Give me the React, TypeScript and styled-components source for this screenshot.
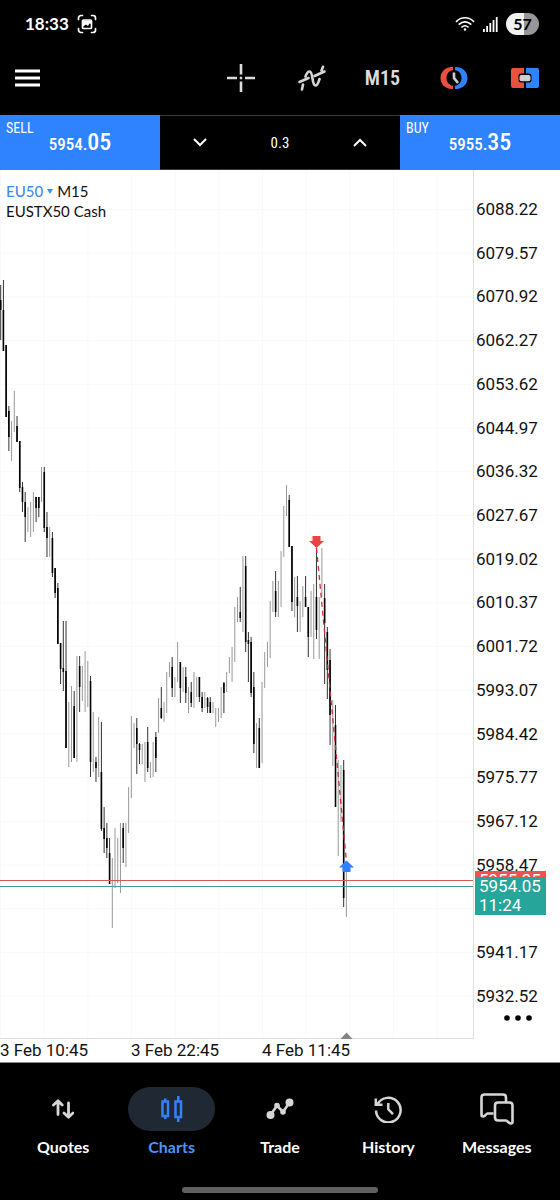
import React from "react";
import styled, { createGlobalStyle } from "styled-components";

const GlobalStyle = createGlobalStyle`
  * { box-sizing: border-box; }
  body { margin: 0; background: #000; }
  button, input { font: inherit; color: inherit; border: 0; background: none; padding: 0; margin: 0; }
`;

const condensed = `"Liberation Sans Narrow", "Roboto Condensed", Roboto, sans-serif`;
const casual = `Lato, "Open Sans", sans-serif`;

const Screen = styled.div`
  min-height: 100vh;
  display: flex;
  flex-direction: column;
  background: #000;
  color: #fff;
  font-family: Roboto, sans-serif;
`;

const StatusBar = styled.header`
  display: flex;
  align-items: center;
  height: 48px;
  padding: 0 21px 0 25px;
  gap: 8px;
`;

const Clock = styled.span`
  font: 700 17px/24px ${casual};
`;

const StatusIcons = styled.div`
  display: flex;
  align-items: center;
  gap: 8px;
  margin-left: auto;
`;

const Battery = styled.span`
  width: 33px;
  height: 22px;
  border-radius: 11px;
  background: linear-gradient(90deg, #f2f2f2 56%, #979797 56%);
  color: #000;
  text-align: center;
  font: 700 16px/22px ${casual};
`;

const Toolbar = styled.div`
  display: flex;
  align-items: center;
  justify-content: space-between;
  height: 67px;
  padding: 0 21px 8px 15px;
`;

const ToolGroup = styled.div`
  display: grid;
  grid-template-columns: repeat(5, 71px);
  justify-items: center;
  align-items: center;
  margin-right: -21px;
`;

const IconButton = styled.button`
  display: flex;
  align-items: center;
  justify-content: center;
  cursor: pointer;
  color: #dcdcdc;
  font: 600 20px/28px ${condensed};
`;

const TradeBar = styled.div`
  display: grid;
  grid-template-columns: 2fr 3fr 2fr;
  height: 55px;
`;

const QuoteButton = styled.button`
  display: flex;
  flex-direction: column;
  background: #3083ff;
  color: #fff;
  padding: 6px;
  text-align: left;
  cursor: pointer;
`;

const Side = styled.span`
  font: 400 14px/14px ${condensed};
`;

const Quote = styled.span`
  align-self: center;
  display: flex;
  align-items: baseline;
  font: 500 17px/24px ${condensed};
  margin-top: -5px;
`;

const Pips = styled.span`
  font-size: 24px;
`;

const VolumeBox = styled.div`
  display: grid;
  grid-template-columns: repeat(3, 1fr);
  align-items: center;
  justify-items: center;
  border: 1px solid #36383b;
  border-width: 1px 0;
`;

const VolumeInput = styled.input`
  width: 100%;
  text-align: center;
  color: #fff;
  font: 400 15px/20px ${condensed};
`;

const Chart = styled.main`
  position: relative;
  background: #fff;
  color: #111;
  border-bottom: 1px solid #8a8a8a;
`;

const ChartRow = styled.div`
  display: grid;
  grid-template-columns: minmax(0, 1fr) 86px;
`;

const Plot = styled.svg`
  display: block;
  width: 100%;
  height: auto;
`;

const ChartTitle = styled.div`
  position: absolute;
  top: 11px;
  left: 6px;
  color: #111;
  font: 400 15px/20px ${casual};
`;

const SymbolButton = styled.button`
  display: inline-flex;
  align-items: center;
  gap: 4px;
  margin-right: 4px;
  color: #3f8cf0;
  font-weight: 500;
  cursor: pointer;
`;

const PriceAxis = styled.div`
  position: relative;
  display: flex;
  flex-direction: column;
  padding: 29px 0 9px 2px;
`;

const PriceList = styled.ol`
  flex: 1;
  display: flex;
  flex-direction: column;
  justify-content: space-between;
  list-style: none;
  margin: 0;
  padding: 0;
  font-size: 17px;
  line-height: 20px;
`;

const PriceLabel = styled.li`
  height: 20px;
`;

const MoreButton = styled.button`
  width: 28px;
  height: 24px;
  margin-left: 28px;
  display: flex;
  align-items: center;
  cursor: pointer;
`;

const PriceTag = styled.div<{ $color: string; $top: number }>`
  position: absolute;
  left: 1px;
  top: ${(p) => p.$top}px;
  width: 71px;
  padding-left: 4px;
  background: ${(p) => p.$color};
  color: #fff;
  font-size: 17px;
  line-height: 19px;
`;

const TimeAxis = styled.div`
  display: grid;
  grid-template-columns: repeat(3, 131fr) 167fr;
  height: 23px;
  font-size: 17px;
  line-height: 23px;
  white-space: nowrap;
`;

const BottomNav = styled.nav`
  flex: 1;
  display: flex;
  flex-direction: column;
  justify-content: space-between;
  padding-bottom: 7px;
`;

const Tabs = styled.div`
  display: grid;
  grid-template-columns: repeat(5, 1fr);
  padding: 24px 9px 0;
`;

const Tab = styled.a<{ $active?: boolean }>`
  display: flex;
  flex-direction: column;
  align-items: center;
  gap: 4px;
  text-decoration: none;
  color: ${(p) => (p.$active ? "#4a94f8" : "#fff")};
  font: 700 16px/24px ${casual};
`;

const TabIcon = styled.span<{ $active?: boolean }>`
  display: flex;
  align-items: center;
  justify-content: center;
  width: 87px;
  height: 44px;
  border-radius: 22px;
  color: ${(p) => (p.$active ? "#3083ff" : "#d6d6d6")};
  background: ${(p) => (p.$active ? "#202833" : "transparent")};
`;

const HomeHandle = styled.div`
  align-self: center;
  width: 35%;
  height: 6px;
  border-radius: 3px;
  background: #606060;
`;

/* The empty slot is where the current price tag sits. */
const prices = [
  "6088.22", "6079.57", "6070.92", "6062.27", "6053.62", "6044.97", "6036.32",
  "6027.67", "6019.02", "6010.37", "6001.72", "5993.07", "5984.42", "5975.77",
  "5967.12", "5958.47", "", "5941.17", "5932.52",
];

/* One entry per M15 bar: high, low, and for falling bars the body's top and bottom. */
type Bar = [number, number, number?, number?];
const bars: Bar[] = [
  [115, 170, 130, 140], [110, 181, 140, 181], [175, 247, 175, 247], [236, 281, 241, 267],
  [251, 291], [221, 262], [246, 272, 256, 272], [271, 322, 271, 318],
  [312, 342, 317, 332], [322, 372, 332, 347], [337, 362], [332, 367],
  [322, 362], [327, 352, 327, 338], [327, 347, 327, 338], [297, 332],
  [297, 362, 302, 358], [342, 387, 357, 368], [357, 387], [362, 407, 368, 403],
  [398, 428, 398, 423], [413, 474, 418, 474], [473, 514, 473, 499], [451, 521, 498, 502],
  [451, 578, 501, 578], [532, 597], [516, 592], [521, 588, 536, 588],
  [486, 592], [486, 542, 496, 517], [496, 531], [481, 542],
  [491, 537], [506, 607, 511, 592], [542, 602], [587, 612, 592, 598],
  [547, 607], [552, 661, 602, 659], [637, 683, 658, 669], [653, 688, 668, 678],
  [668, 714, 683, 714], [688, 758], [658, 718], [668, 713],
  [653, 723], [653, 693, 658, 678], [653, 697], [617, 663],
  [546, 628], [553, 578], [548, 604, 558, 574], [573, 594, 574, 580],
  [574, 594], [572, 612], [557, 602, 572, 598], [592, 608],
  [572, 607], [562, 602, 567, 588], [528, 563], [517, 549, 538, 548],
  [532, 552], [502, 543], [492, 507], [487, 527, 497, 518],
  [507, 527], [472, 512], [492, 533, 492, 518], [497, 522],
  [497, 533, 507, 523], [517, 543], [512, 537, 522, 533], [502, 538],
  [507, 527], [507, 532, 507, 527], [522, 542, 527, 538], [522, 538],
  [527, 543, 528, 537], [527, 543, 532, 543], [532, 543], [538, 557],
  [538, 552], [517, 548], [512, 543, 513, 523], [502, 522],
  [487, 503], [477, 512], [437, 492], [427, 452],
  [417, 452, 442, 448], [386, 462], [386, 482, 396, 472], [462, 512, 470, 474],
  [467, 527, 472, 523], [502, 583, 517, 574], [553, 598], [548, 598, 558, 598],
  [512, 593], [482, 518], [472, 497], [431, 488],
  [411, 442], [401, 447, 421, 442], [411, 447], [381, 437],
  [336, 387], [315, 346], [325, 377, 330, 377], [376, 441, 376, 432],
  [407, 447], [406, 462, 427, 436], [431, 462], [416, 447],
  [406, 437, 427, 437], [437, 487, 437, 467], [421, 467], [414, 489],
  [378, 469, 427, 460], [427, 489], [378, 427], [414, 514, 428, 453],
  [457, 529, 462, 500], [479, 575, 490, 545], [530, 596], [535, 637, 555, 637],
  [590, 686], [595, 652], [590, 737, 600, 728], [691, 747],
];

const BAR_START = 0.7;
const BAR_STEP = 2.722;
const gridX = Array.from({ length: 11 }, (_, i) => i * 43.67 + 0.5);
const gridY = Array.from({ length: 19 }, (_, i) => i * 43.7 + 39.5);

const PricePlot = () => (
  <Plot viewBox="0 0 474 869" role="img" aria-label="EU50 M15 candlestick chart">
    <g stroke="#f9f9f9">
      {gridX.map((x) => <line key={x} x1={x} x2={x} y1="0" y2="868" />)}
      {gridY.map((y) => <line key={y} x1="0" x2="473" y1={y} y2={y} />)}
    </g>
    <path d="M473.5 0V868.5H0" fill="none" stroke="#dedede" />
    {bars.map(([high, low, top, bottom], i) => {
      const x = BAR_START + i * BAR_STEP;
      const falling = top !== undefined;
      return (
        <g key={i}>
          <line x1={x} x2={x} y1={high} y2={low} stroke={falling ? "#333" : "#8c8c8c"} strokeWidth={falling ? 1 : 0.9} />
          {falling && <line x1={x} x2={x} y1={top} y2={bottom} stroke="#000" strokeWidth="1.6" />}
        </g>
      );
    })}
    <line x1="0" x2="473" y1="710.5" y2="710.5" stroke="#d05a5a" />
    <line x1="0" x2="473" y1="716.5" y2="716.5" stroke="#3f9c94" />
    <line x1="316.5" y1="378" x2="346.5" y2="692" stroke="#cf2f3d" strokeWidth="1.3" strokeDasharray="5 4" />
    <path d="M312.5 366h8v5h3.5l-7.5 7-7.5-7h3.5z" fill="#ec4444" />
    <path d="M342.5 702h8v-4.5h3.5l-7.5-7-7.5 7h3.5z" fill="#2f7fff" />
    <path d="M340.5 869l6-6.5 6 6.5z" fill="#858585" />
  </Plot>
);

const CaptureIcon = () => (
  <svg width="20" height="20" viewBox="0 0 20 20" fill="none" stroke="#fff" strokeWidth="1.7" strokeLinecap="round">
    <path d="M1.5 5.500V4a2.500 2.500 0 0 1 2.500-2.500h1.500M14.500 1.500H16A2.500 2.500 0 0 1 18.500 4v1.500M18.500 14.500V16a2.500 2.500 0 0 1-2.500 2.500h-1.500M5.500 18.500H4A2.500 2.500 0 0 1 1.500 16v-1.500" />
    <rect x="5.5" y="6" width="9" height="8.5" rx="1" />
    <path d="M6 6.500h8.500v3.500l-2-.5-1.500 2.500-2-1.500-3 2z" fill="#fff" stroke="none" />
  </svg>
);

const WifiIcon = () => (
  <svg width="20" height="16" viewBox="0 0 20 16" fill="none" stroke="#fff" strokeWidth="1.7" strokeLinecap="round">
    <path d="M1.500 5.300a12 12 0 0 1 17 0M4.300 8.200a8 8 0 0 1 11.400 0M7 11a4.200 4.200 0 0 1 6 0" />
    <circle cx="10" cy="13.5" r="1.2" fill="#fff" stroke="none" />
  </svg>
);

const SignalIcon = () => (
  <svg width="15" height="16" viewBox="0 0 15 16" fill="#fff">
    <rect x="0" y="13" width="1.8" height="3" />
    <rect x="3.2" y="10" width="1.8" height="6" />
    <rect x="6.4" y="7" width="1.8" height="9" />
    <rect x="9.6" y="4" width="1.8" height="12" />
    <rect x="12.8" y="1" width="1.8" height="15" />
  </svg>
);

const MenuIcon = () => (
  <svg width="25" height="18" viewBox="0 0 25 18" fill="#fff">
    <rect y="0.5" width="25" height="3" />
    <rect y="7.5" width="25" height="3" />
    <rect y="14.5" width="25" height="3" />
  </svg>
);

const CrosshairIcon = () => (
  <svg width="28" height="28" viewBox="0 0 28 28" stroke="#dcdcdc" strokeWidth="2.6">
    <path d="M14 0v10.500M14 17.500V28M0 14h10M18 14h10M12.800 14h2.400" />
  </svg>
);

const IndicatorIcon = () => (
  <svg width="30" height="26" viewBox="0 0 30 26" fill="none" stroke="#d6d6d6" strokeWidth="2.6" strokeLinecap="round">
    <path d="M2.500 17L11.500 13M17.500 11L27.500 6.500" />
    <path d="M5 24.500L6 19.500M8.500 11.500Q10.300 6.500 12.500 6.500C16.500 6.500 14.500 20.500 18.500 20.500C20.800 20.500 21.500 17 22.500 14M24.500 5.500L26 1.800" />
  </svg>
);

const ClockIcon = () => (
  <svg width="28" height="24" viewBox="0 0 28 24" fill="none">
    <path d="M13 1v3.300C8.800 4.800 6.500 8 6.500 12s2.300 7.200 6.500 7.700V23h-2C4.500 22.500 .5 17.500 .5 12S4.500 1.500 11 1z" fill="#e8503f" />
    <path d="M15 1v3.300c4.200.5 6.500 3.700 6.500 7.700s-2.300 7.200-6.500 7.700V23h2c6.500-.5 10.500-5.500 10.500-11S23.500 1.500 17 1z" fill="#3083ff" />
    <path d="M14 6.500V12l4 5" stroke="#cfcfcf" strokeWidth="2.6" />
  </svg>
);

const OneClickIcon = () => (
  <svg width="28" height="20" viewBox="0 0 28 20">
    <path d="M2 0H13V5.500H10a2.500 2.500 0 0 0-2.500 2.500v4a2.500 2.500 0 0 0 2.500 2.500h3V20H2a2 2 0 0 1-2-2V2a2 2 0 0 1 2-2z" fill="#e8503f" />
    <path d="M26 0H15V5.500h3a2.500 2.500 0 0 1 2.500 2.500v4a2.500 2.500 0 0 1-2.500 2.500h-3V20H26a2 2 0 0 0 2-2V2a2 2 0 0 0-2-2z" fill="#3083ff" />
    <rect x="8.5" y="7" width="11" height="6.3" rx="2" fill="#cfcfcf" />
  </svg>
);

const Chevron = ({ up }: { up?: boolean }) => (
  <svg width="14" height="9" viewBox="0 0 14 9" fill="none" stroke="#fff" strokeWidth="2">
    <path d={up ? "M1 8L7 2L13 8" : "M1 1L7 7L13 1"} />
  </svg>
);

const QuotesIcon = () => (
  <svg width="22" height="20" viewBox="0 0 22 20" fill="none" stroke="currentColor" strokeWidth="2.8" strokeLinecap="round" strokeLinejoin="round">
    <path d="M6 15.500V2M1.500 6L6 1.800L10.200 6M16.500 4V18M12 14L16.500 18.200L21 14" />
  </svg>
);

const CandlesIcon = () => (
  <svg width="22" height="26" viewBox="0 0 22 26" fill="none" stroke="currentColor" strokeWidth="2.5">
    <rect x="1.5" y="5.5" width="5.5" height="14.5" />
    <rect x="14.5" y="5.5" width="5.5" height="15.5" />
    <path d="M4.250 2.500V5M4.250 20.500V23M17.250 0V5M17.250 21V26" />
  </svg>
);

const TradeIcon = () => (
  <svg width="28" height="24" viewBox="0 0 28 24" fill="none" stroke="currentColor" strokeWidth="2.6">
    <path d="M4.500 18L11 8.500L17 15L23.500 5.500" />
    <g fill="currentColor" stroke="none">
      <circle cx="4.5" cy="18" r="4" />
      <circle cx="11" cy="8.5" r="2.8" />
      <circle cx="17" cy="15" r="2.8" />
      <circle cx="23.5" cy="5.5" r="4" />
    </g>
  </svg>
);

const HistoryIcon = () => (
  <svg width="28" height="28" viewBox="0 0 28 28" fill="none" stroke="currentColor" strokeWidth="2.5">
    <path d="M3.500 9.200A12.300 12.300 0 1 1 2 15.500M1.800 3.500V9.800H8.500M14.300 8V14.300L19 19.200" />
  </svg>
);

const MessagesIcon = () => (
  <svg width="34" height="32" viewBox="0 0 34 32" fill="none" stroke="currentColor" strokeWidth="2.6" strokeLinejoin="round">
    <path d="M13.500 20.500H7.500C6 20.500 5.500 23.500 3 23.500Q1.500 23.500 1.500 22V4.500Q1.500 1.500 4.500 1.500H23Q26 1.500 26 4.500V9" />
    <path d="M18 9.500H29.500Q32.500 9.500 32.500 12.500V29Q32.500 30.500 31 30.500C28.500 30.500 27.500 27.500 26 27.500H18Q15 27.500 15 24.500V12.500Q15 9.500 18 9.500Z" />
  </svg>
);

const MoreIcon = () => (
  <svg width="28" height="6" viewBox="0 0 28 6" fill="#000">
    <circle cx="3" cy="3" r="2.8" />
    <circle cx="14" cy="3" r="2.8" />
    <circle cx="25" cy="3" r="2.8" />
  </svg>
);

const tabs = [
  { label: "Quotes", icon: <QuotesIcon /> },
  { label: "Charts", icon: <CandlesIcon />, active: true },
  { label: "Trade", icon: <TradeIcon /> },
  { label: "History", icon: <HistoryIcon /> },
  { label: "Messages", icon: <MessagesIcon /> },
];

export default function App() {
  return (
    <Screen>
      <GlobalStyle />
      <StatusBar>
        <Clock>18:33</Clock>
        <CaptureIcon />
        <StatusIcons>
          <WifiIcon />
          <SignalIcon />
          <Battery>57</Battery>
        </StatusIcons>
      </StatusBar>

      <Toolbar>
        <IconButton aria-label="Menu"><MenuIcon /></IconButton>
        <ToolGroup>
          <IconButton aria-label="Crosshair"><CrosshairIcon /></IconButton>
          <IconButton aria-label="Indicators"><IndicatorIcon /></IconButton>
          <IconButton>M15</IconButton>
          <IconButton aria-label="Order"><ClockIcon /></IconButton>
          <IconButton aria-label="One click trading"><OneClickIcon /></IconButton>
        </ToolGroup>
      </Toolbar>

      <TradeBar>
        <QuoteButton>
          <Side>SELL</Side>
          <Quote>5954.<Pips>05</Pips></Quote>
        </QuoteButton>
        <VolumeBox>
          <IconButton aria-label="Decrease volume"><Chevron /></IconButton>
          <VolumeInput aria-label="Volume" defaultValue="0.3" />
          <IconButton aria-label="Increase volume"><Chevron up /></IconButton>
        </VolumeBox>
        <QuoteButton>
          <Side>BUY</Side>
          <Quote>5955.<Pips>35</Pips></Quote>
        </QuoteButton>
      </TradeBar>

      <Chart>
        <ChartRow>
          <PricePlot />
          <PriceAxis>
            <PriceList>
              {prices.map((p, i) => <PriceLabel key={i}>{p}</PriceLabel>)}
            </PriceList>
            <MoreButton aria-label="More"><MoreIcon /></MoreButton>
            <PriceTag $color="#ef5350" $top={701}>5955.35</PriceTag>
            <PriceTag $color="#26a69a" $top={707}>5954.05<br />11:24</PriceTag>
          </PriceAxis>
        </ChartRow>
        <TimeAxis>
          <span>3 Feb 10:45</span>
          <span>3 Feb 22:45</span>
          <span>4 Feb 11:45</span>
        </TimeAxis>
        <ChartTitle>
          <SymbolButton>
            EU50
            <svg width="6" height="5" viewBox="0 0 6 5"><path d="M0 0h6L3 5z" fill="#3f8cf0" /></svg>
          </SymbolButton>
          M15
          <div>EUSTX50 Cash</div>
        </ChartTitle>
      </Chart>

      <BottomNav>
        <Tabs>
          {tabs.map((t) => (
            <Tab key={t.label} href="#" $active={t.active}>
              <TabIcon $active={t.active}>{t.icon}</TabIcon>
              {t.label}
            </Tab>
          ))}
        </Tabs>
        <HomeHandle />
      </BottomNav>
    </Screen>
  );
}
